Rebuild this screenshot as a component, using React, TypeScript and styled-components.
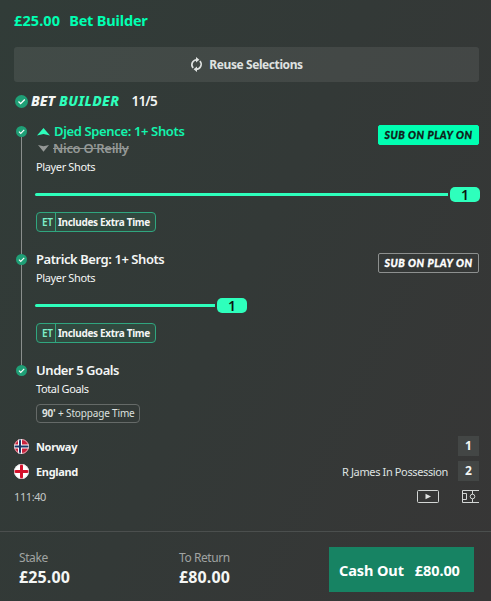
import React from 'react';
import styled, { createGlobalStyle, css } from 'styled-components';

const mint = '#2effbc';
const brightMint = '#00ffb2';

const GlobalStyle = createGlobalStyle`
  * { box-sizing: border-box; }
  body { margin: 0; background: #333735; }
`;

const Slip = styled.main`
  width: 491px;
  height: 601px;
  display: flex;
  flex-direction: column;
  overflow: hidden;
  white-space: nowrap;
  color: #f4f6f5;
  font-family: 'Noto Sans', 'Segoe UI', sans-serif;
  background: linear-gradient(115deg, #313c38 0%, #333937 48%, #373636 100%);

  > * { flex-shrink: 0; }
`;

const Title = styled.h1`
  margin: 0;
  padding: 10px 0 0 14px;
  height: 47px;
  display: flex;
  gap: 9px;
  font-size: 14.5px;
  line-height: 20px;
  font-weight: 700;
  letter-spacing: -0.17px;
  color: ${brightMint};
`;

const TitleStake = styled.span`
  letter-spacing: 0.1px;
`;

const ReuseButton = styled.button`
  margin: 0 12px 0 14px;
  padding: 0;
  height: 35px;
  border: 0;
  border-radius: 3px;
  display: flex;
  align-items: center;
  justify-content: center;
  gap: 6px;
  background: rgba(255, 255, 255, 0.08);
  color: #dfe2e1;
  font: 700 12px 'Noto Sans', sans-serif;
  letter-spacing: -0.42px;
`;

const BuilderHeading = styled.div`
  height: 41px;
  padding: 0 0 3px 15px;
  display: flex;
  align-items: center;
`;

const Logo = styled.div`
  display: flex;
  gap: 4px;
  margin: 0 12px 0 3px;
  font-size: 14px;
  font-style: italic;
  font-weight: 800;
  line-height: 18px;
`;

const LogoAccent = styled.span`
  color: ${mint};
  letter-spacing: 0.4px;
`;

const Odds = styled.span`
  font-size: 13.5px;
  font-weight: 600;
  letter-spacing: -0.8px;
`;

const LegRow = styled.section`
  display: flex;
  padding: 0 11px 0 16px;
`;

const Rail = styled.div`
  width: 20px;
  padding-top: 3px;
  display: flex;
  flex-direction: column;
  flex: none;
`;

const RailLine = styled.div`
  flex: 1;
  width: 1px;
  margin: 0 0 -3px 5px;
  background: #8a8f8d;
`;

const LegBody = styled.div<{ $last?: boolean }>`
  flex: 1;
  padding-bottom: ${(p) => (p.$last ? 0 : 19)}px;
`;

const LegTop = styled.div`
  display: flex;
  justify-content: space-between;
`;

const Selection = styled.div<{ $tone?: 'on' | 'off' }>`
  height: 17px;
  display: flex;
  align-items: center;
  font-size: 13px;
  line-height: 17px;
  font-weight: 600;
  letter-spacing: -0.44px;
  ${(p) => p.$tone === 'on' && css`color: #12f5ae; letter-spacing: -0.36px; svg { margin: 0 4px 0 1px; }`}
  ${(p) => p.$tone === 'off' && css`
    color: #949896;
    letter-spacing: -0.3px;
    svg { margin: 0 4px 0 2px; }
    span { text-decoration: line-through; text-decoration-thickness: 1px; }
  `}
`;

const Market = styled.div`
  height: 20px;
  font-size: 11px;
  line-height: 20px;
  letter-spacing: -0.37px;
`;

const SubBadge = styled.div<{ $active?: boolean }>`
  width: 101px;
  height: 20px;
  margin: 2px 1px 0 0;
  border: 1px solid ${(p) => (p.$active ? brightMint : '#8d908f')};
  border-radius: 2px;
  background: ${(p) => (p.$active ? brightMint : 'transparent')};
  color: ${(p) => (p.$active ? '#10201a' : '#fff')};
  font: italic 900 10.5px/19px Lato, sans-serif;
  letter-spacing: 0.55px;
  -webkit-text-stroke: 0.3px currentColor;
  text-align: center;
`;

const Progress = styled.div<{ $short?: boolean }>`
  width: ${(p) => (p.$short ? 212 : 445)}px;
  height: 15px;
  margin: 10px 0 10px -1px;
  display: flex;
  align-items: center;
`;

const Track = styled.div`
  flex: 1;
  height: 3px;
  margin-right: 2px;
  border-radius: 2px 0 0 2px;
  background: ${mint};
`;

const Count = styled.div`
  width: 30px;
  height: 15px;
  border-radius: 5px;
  background: ${mint};
  color: #0b1512;
  font-size: 14px;
  line-height: 15px;
  font-weight: 600;
  text-align: center;
`;

const ExtraTime = styled.div`
  width: 120px;
  height: 20px;
  display: flex;
  border: 1px solid #30a67f;
  border-radius: 4px;
  background: #31493f;
  font-size: 10px;
  line-height: 19px;
  font-weight: 700;
  letter-spacing: -0.32px;
`;

const ExtraTimeCode = styled.span`
  width: 19px;
  padding-left: 5px;
  border-right: 1px solid #30a67f;
  color: #7df0cb;
  font-weight: 600;
`;

const ExtraTimeText = styled.span`
  padding-left: 2px;
`;

const RegularTime = styled.div`
  width: 104px;
  height: 19px;
  margin-top: 5px;
  padding-left: 5px;
  border: 1px solid #656a68;
  border-radius: 4px;
  color: #dde0df;
  font-size: 10px;
  line-height: 17px;
  letter-spacing: -0.16px;
`;

const Fixture = styled.section`
  height: 98px;
  margin-top: 11px;
  padding: 0 12px 0 14px;
  border-bottom: 1px solid #4b4f4e;
`;

const TeamRow = styled.div`
  height: 25px;
  display: flex;
  align-items: center;
`;

const TeamName = styled.span`
  margin-left: 7px;
  flex: 1;
  font-size: 11px;
  font-weight: 700;
  letter-spacing: -0.32px;
`;

const Possession = styled.span`
  margin-right: 10px;
  color: #dfe2e1;
  font-size: 11px;
  letter-spacing: -0.37px;
`;

const Score = styled.span`
  width: 21px;
  height: 20px;
  margin-bottom: 1px;
  background: #434645;
  font-size: 12px;
  line-height: 20px;
  font-weight: 700;
  text-align: center;
`;

const ClockRow = styled.div`
  height: 25px;
  display: flex;
  align-items: center;
  gap: 23px;
  color: #c5c9c7;
  font-size: 11px;
  letter-spacing: -0.4px;
`;

const Clock = styled.span`
  flex: 1;
`;

const Footer = styled.footer`
  display: flex;
  padding: 15px 0 0 19px;
`;

const Amount = styled.div`
  width: 160px;
  padding-top: 2px;
`;

const AmountLabel = styled.div`
  color: #a0a4a2;
  font-size: 12px;
  line-height: 18px;
  letter-spacing: -0.42px;
`;

const AmountValue = styled.div`
  font-size: 16px;
  line-height: 20px;
  font-weight: 700;
  letter-spacing: 0.13px;
`;

const CashOut = styled.button`
  width: 145px;
  height: 45px;
  margin-left: -10px;
  padding: 0 0 0 10px;
  border: 0;
  display: flex;
  align-items: center;
  gap: 11px;
  background: #178363;
  color: #fff;
  font: 700 14.5px 'Noto Sans', sans-serif;
  letter-spacing: -0.1px;
`;

function Check({ size }: { size: number }) {
  return (
    <svg width={size} height={size} viewBox="0 0 12 12">
      <circle cx="6" cy="6" r="6" fill="#1f9f76" />
      <path d="M3.2 6.1 5.2 8 9 4.2" fill="none" stroke="#fff" strokeWidth="1.25" />
    </svg>
  );
}

function ReuseIcon() {
  return (
    <svg width="13" height="15" viewBox="0 0 13 15" fill="none" stroke="#dfe2e1" strokeWidth="1.6">
      <path d="M3.1 11 A5 5 0 0 1 6.8 2.7" />
      <path d="M9.9 4 A5 5 0 0 1 6.2 12.3" />
      <path d="M6 0 9.4 2.8 6 5.6ZM7 9.4 3.6 12.2 7 15Z" fill="#dfe2e1" stroke="none" />
    </svg>
  );
}

const UpArrow = () => (
  <svg width="13" height="8" viewBox="0 0 13 8">
    <path d="M6.5 0 13 7.6 6.5 6 0 7.6Z" fill={mint} />
  </svg>
);

const DownArrow = () => (
  <svg width="11" height="7" viewBox="0 0 11 7">
    <path d="M0 0 5.5 1.2 11 0 5.5 6.8Z" fill="#949896" />
  </svg>
);

const Norway = () => (
  <svg width="15" height="15" viewBox="0 0 15 15">
    <clipPath id="norway"><circle cx="7.5" cy="7.5" r="7.5" /></clipPath>
    <g clipPath="url(#norway)">
      <path fill="#c8213c" d="M0 0h15v15H0z" />
      <path stroke="#fff" strokeWidth="4" d="M6 0v15M0 7.5h15" />
      <path stroke="#173566" strokeWidth="2" d="M6 0v15M0 7.5h15" />
    </g>
    <circle cx="7.5" cy="7.5" r="7" fill="none" stroke="#e5e3e5" strokeOpacity=".75" />
  </svg>
);

const England = () => (
  <svg width="15" height="15" viewBox="0 0 15 15">
    <clipPath id="england"><circle cx="7.5" cy="7.5" r="7.5" /></clipPath>
    <g clipPath="url(#england)">
      <path fill="#fff" d="M0 0h15v15H0z" />
      <path stroke="#d5112c" strokeWidth="3" d="M7.5 0v15M0 7.5h15" />
    </g>
    <circle cx="7.5" cy="7.5" r="7" fill="none" stroke="#e5e3e5" strokeOpacity=".75" />
  </svg>
);

const Video = () => (
  <svg width="22" height="13" viewBox="0 0 22 13">
    <rect x=".5" y=".5" width="21" height="12" rx="1" fill="none" stroke="#d3d6d5" />
    <path d="M8.5 3.7 14 6.5 8.5 9.3Z" fill="#dfe2e1" />
  </svg>
);

const Pitch = () => (
  <svg width="17" height="13" viewBox="0 0 17 13" fill="none" stroke="#d3d6d5">
    <path d="M17 .5H.5v12H17M.5 3.5h4v6h-4M10.5 .5v3.7M10.5 8.8v3.7" />
    <circle cx="10.5" cy="6.5" r="2.3" />
  </svg>
);

interface LegProps {
  name: string;
  market: string;
  replaced?: string;
  short?: boolean;
}

function PlayerLeg({ name, market, replaced, short }: LegProps) {
  return (
    <LegRow>
      <Rail><Check size={11} /><RailLine /></Rail>
      <LegBody>
        <LegTop>
          <div>
            <Selection $tone={replaced ? 'on' : undefined}>{replaced && <UpArrow />}<span>{name}</span></Selection>
            {replaced && <Selection $tone="off"><DownArrow /><span>{replaced}</span></Selection>}
            <Market>{market}</Market>
          </div>
          <SubBadge $active={!!replaced}>SUB ON PLAY ON</SubBadge>
        </LegTop>
        <Progress $short={short}><Track /><Count>1</Count></Progress>
        <ExtraTime><ExtraTimeCode>ET</ExtraTimeCode><ExtraTimeText>Includes Extra Time</ExtraTimeText></ExtraTime>
      </LegBody>
    </LegRow>
  );
}

export default function App() {
  return (
    <Slip>
      <GlobalStyle />
      <Title><TitleStake>£25.00</TitleStake><span>Bet Builder</span></Title>
      <ReuseButton><ReuseIcon />Reuse Selections</ReuseButton>
      <BuilderHeading>
        <Check size={13} />
        <Logo><span>BET</span><LogoAccent>BUILDER</LogoAccent></Logo>
        <Odds>11/5</Odds>
      </BuilderHeading>
      <PlayerLeg name="Djed Spence: 1+ Shots" replaced="Nico O'Reilly" market="Player Shots" />
      <PlayerLeg name="Patrick Berg: 1+ Shots" market="Player Shots" short />
      <LegRow>
        <Rail><Check size={11} /></Rail>
        <LegBody $last>
          <Selection>Under 5 Goals</Selection>
          <Market>Total Goals</Market>
          <RegularTime><b>90'</b> + Stoppage Time</RegularTime>
        </LegBody>
      </LegRow>
      <Fixture>
        <TeamRow><Norway /><TeamName>Norway</TeamName><Score>1</Score></TeamRow>
        <TeamRow><England /><TeamName>England</TeamName><Possession>R James In Possession</Possession><Score>2</Score></TeamRow>
        <ClockRow><Clock>111:40</Clock><Video /><Pitch /></ClockRow>
      </Fixture>
      <Footer>
        <Amount><AmountLabel>Stake</AmountLabel><AmountValue>£25.00</AmountValue></Amount>
        <Amount><AmountLabel>To Return</AmountLabel><AmountValue>£80.00</AmountValue></Amount>
        <CashOut><span>Cash Out</span><span>£80.00</span></CashOut>
      </Footer>
    </Slip>
  );
}
